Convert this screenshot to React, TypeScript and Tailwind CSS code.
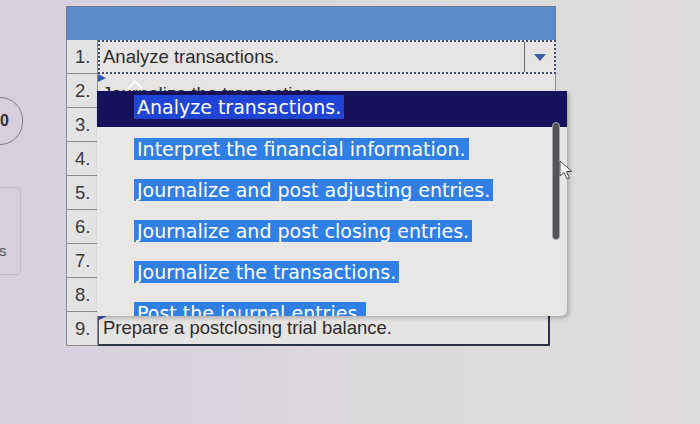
import React from 'react';

const steps: string[] = [
  'Analyze transactions.',
  'Journalize the transactions.',
  '',
  '',
  '',
  '',
  '',
  '',
  'Prepare a postclosing trial balance.',
];

const options: string[] = [
  'Interpret the financial information.',
  'Journalize and post adjusting entries.',
  'Journalize and post closing entries.',
  'Journalize the transactions.',
  'Post the journal entries.',
];

const Marker: React.FC = () => (
  <svg className="absolute left-0 top-0" width="8" height="8" viewBox="0 0 8 8">
    <path d="M0 0 L8 4 L0 8 Z" fill="#2e55b8" />
  </svg>
);

const App: React.FC = () => {
  return (
    <div className="relative w-[700px] h-[424px] overflow-hidden bg-linear-to-r from-[#d7cee0] via-[#dcd9dd] to-[#dedcda] font-['Liberation_Sans',Arial,sans-serif] text-[#2d2d2d]">
      <div className="flex">
        {/* left edge of the page behind */}
        <div className="w-[66px] shrink-0 flex flex-col">
          <div className="mt-[97px] -ml-[23px] w-[46px] h-[48px] rounded-full border border-[#7d7a84] flex items-center justify-center text-[16px] font-bold text-[#333]">
            20
          </div>
          <div className="mt-[42px] -ml-[10px] w-[31px] h-[88px] rounded-[4px] border border-[#c2bcc9] flex items-end pb-[12px] text-[15px] text-[#555]">
            <span className="ml-[8px]">s</span>
          </div>
        </div>

        {/* the table */}
        <div className="mt-[6px] w-[490px] shrink-0">
          <div className="h-[34px] bg-[#5b8bcc] border-t border-x border-[#6c7b90]" />
          {steps.map((text, i) => {
            const first = i === 0;
            const last = i === steps.length - 1;
            return (
              <div key={i} className="flex h-[34px]">
                <div className="w-[32px] shrink-0 bg-[#e4e3e3] border-l border-b border-r border-[#8b8b8d] pl-[8px] flex items-center text-[18.5px] text-[#3a3a3a]">
                  {i + 1}.
                </div>
                {first ? (
                  <div className="flex-1 flex border-2 border-dotted border-[#3b4d70] bg-[#e6e5e3]">
                    <div className="flex-1 flex items-center pl-[3px] text-[18.5px]">{text}</div>
                    <div className="w-[30px] border-l border-[#6b6f78] flex items-center justify-center">
                      <svg width="12" height="7" viewBox="0 0 12 7">
                        <path d="M0 0 H12 L6 7 Z" fill="#3b5ea8" />
                      </svg>
                    </div>
                  </div>
                ) : last ? (
                  <div className="relative w-[452px] bg-[#e5e4e2] border-l border-[#556] border-r-2 border-b-2 border-r-[#2c3345] border-b-[#2c3345] flex items-center pl-[4px] text-[18.5px]">
                    <Marker />
                    {text}
                  </div>
                ) : (
                  <div className="relative flex-1 bg-[#e6e5e3] border-r border-b border-[#8b8b8d] flex items-center pl-[4px] pt-[6px] text-[18.5px]">
                    {i === 1 && <Marker />}
                    {text}
                  </div>
                )}
              </div>
            );
          })}
        </div>
      </div>

      {/* open dropdown list */}
      <div className="absolute left-[97px] top-[91px] w-[470px] h-[225px] overflow-hidden bg-[#e8e7e5] rounded-br-[6px] shadow-[2px_2px_4px_rgba(0,0,0,0.25)] font-['DejaVu_Sans',Verdana,sans-serif] text-white text-[19px]">
        <div className="h-[36px] bg-[#16115a] flex items-center pl-[37px] pb-[4px]">
          <span className="bg-[#1f45d6] px-[3px] leading-[24px]">Analyze transactions.</span>
        </div>
        {options.map((opt) => (
          <div key={opt} className="h-[41px] flex items-center pl-[37px] pt-[3px]">
            <span className="bg-[#2f7fe5] px-[3px] leading-[22px]">{opt}</span>
          </div>
        ))}
        <div className="absolute right-[7px] top-[31px] w-[8px] h-[118px] rounded-full bg-[#555458] border border-[#a4a3a6]" />
      </div>

      {/* caret peeking over row 2 */}
      <svg className="absolute left-[127px] top-[80px]" width="16" height="10" viewBox="0 0 16 10">
        <path d="M1 9 L8 1 L15 9" fill="none" stroke="#fafafa" strokeWidth="2" />
      </svg>

      {/* mouse pointer */}
      <svg className="absolute left-[559px] top-[160px]" width="16" height="22" viewBox="0 0 16 22">
        <path d="M1 1 L1 16 L5 12.5 L8 19 L10.5 18 L7.5 11.5 L13 11.5 Z" fill="#f6f6f6" stroke="#4a4a4a" strokeWidth="1" />
      </svg>
    </div>
  );
};

export default App;
